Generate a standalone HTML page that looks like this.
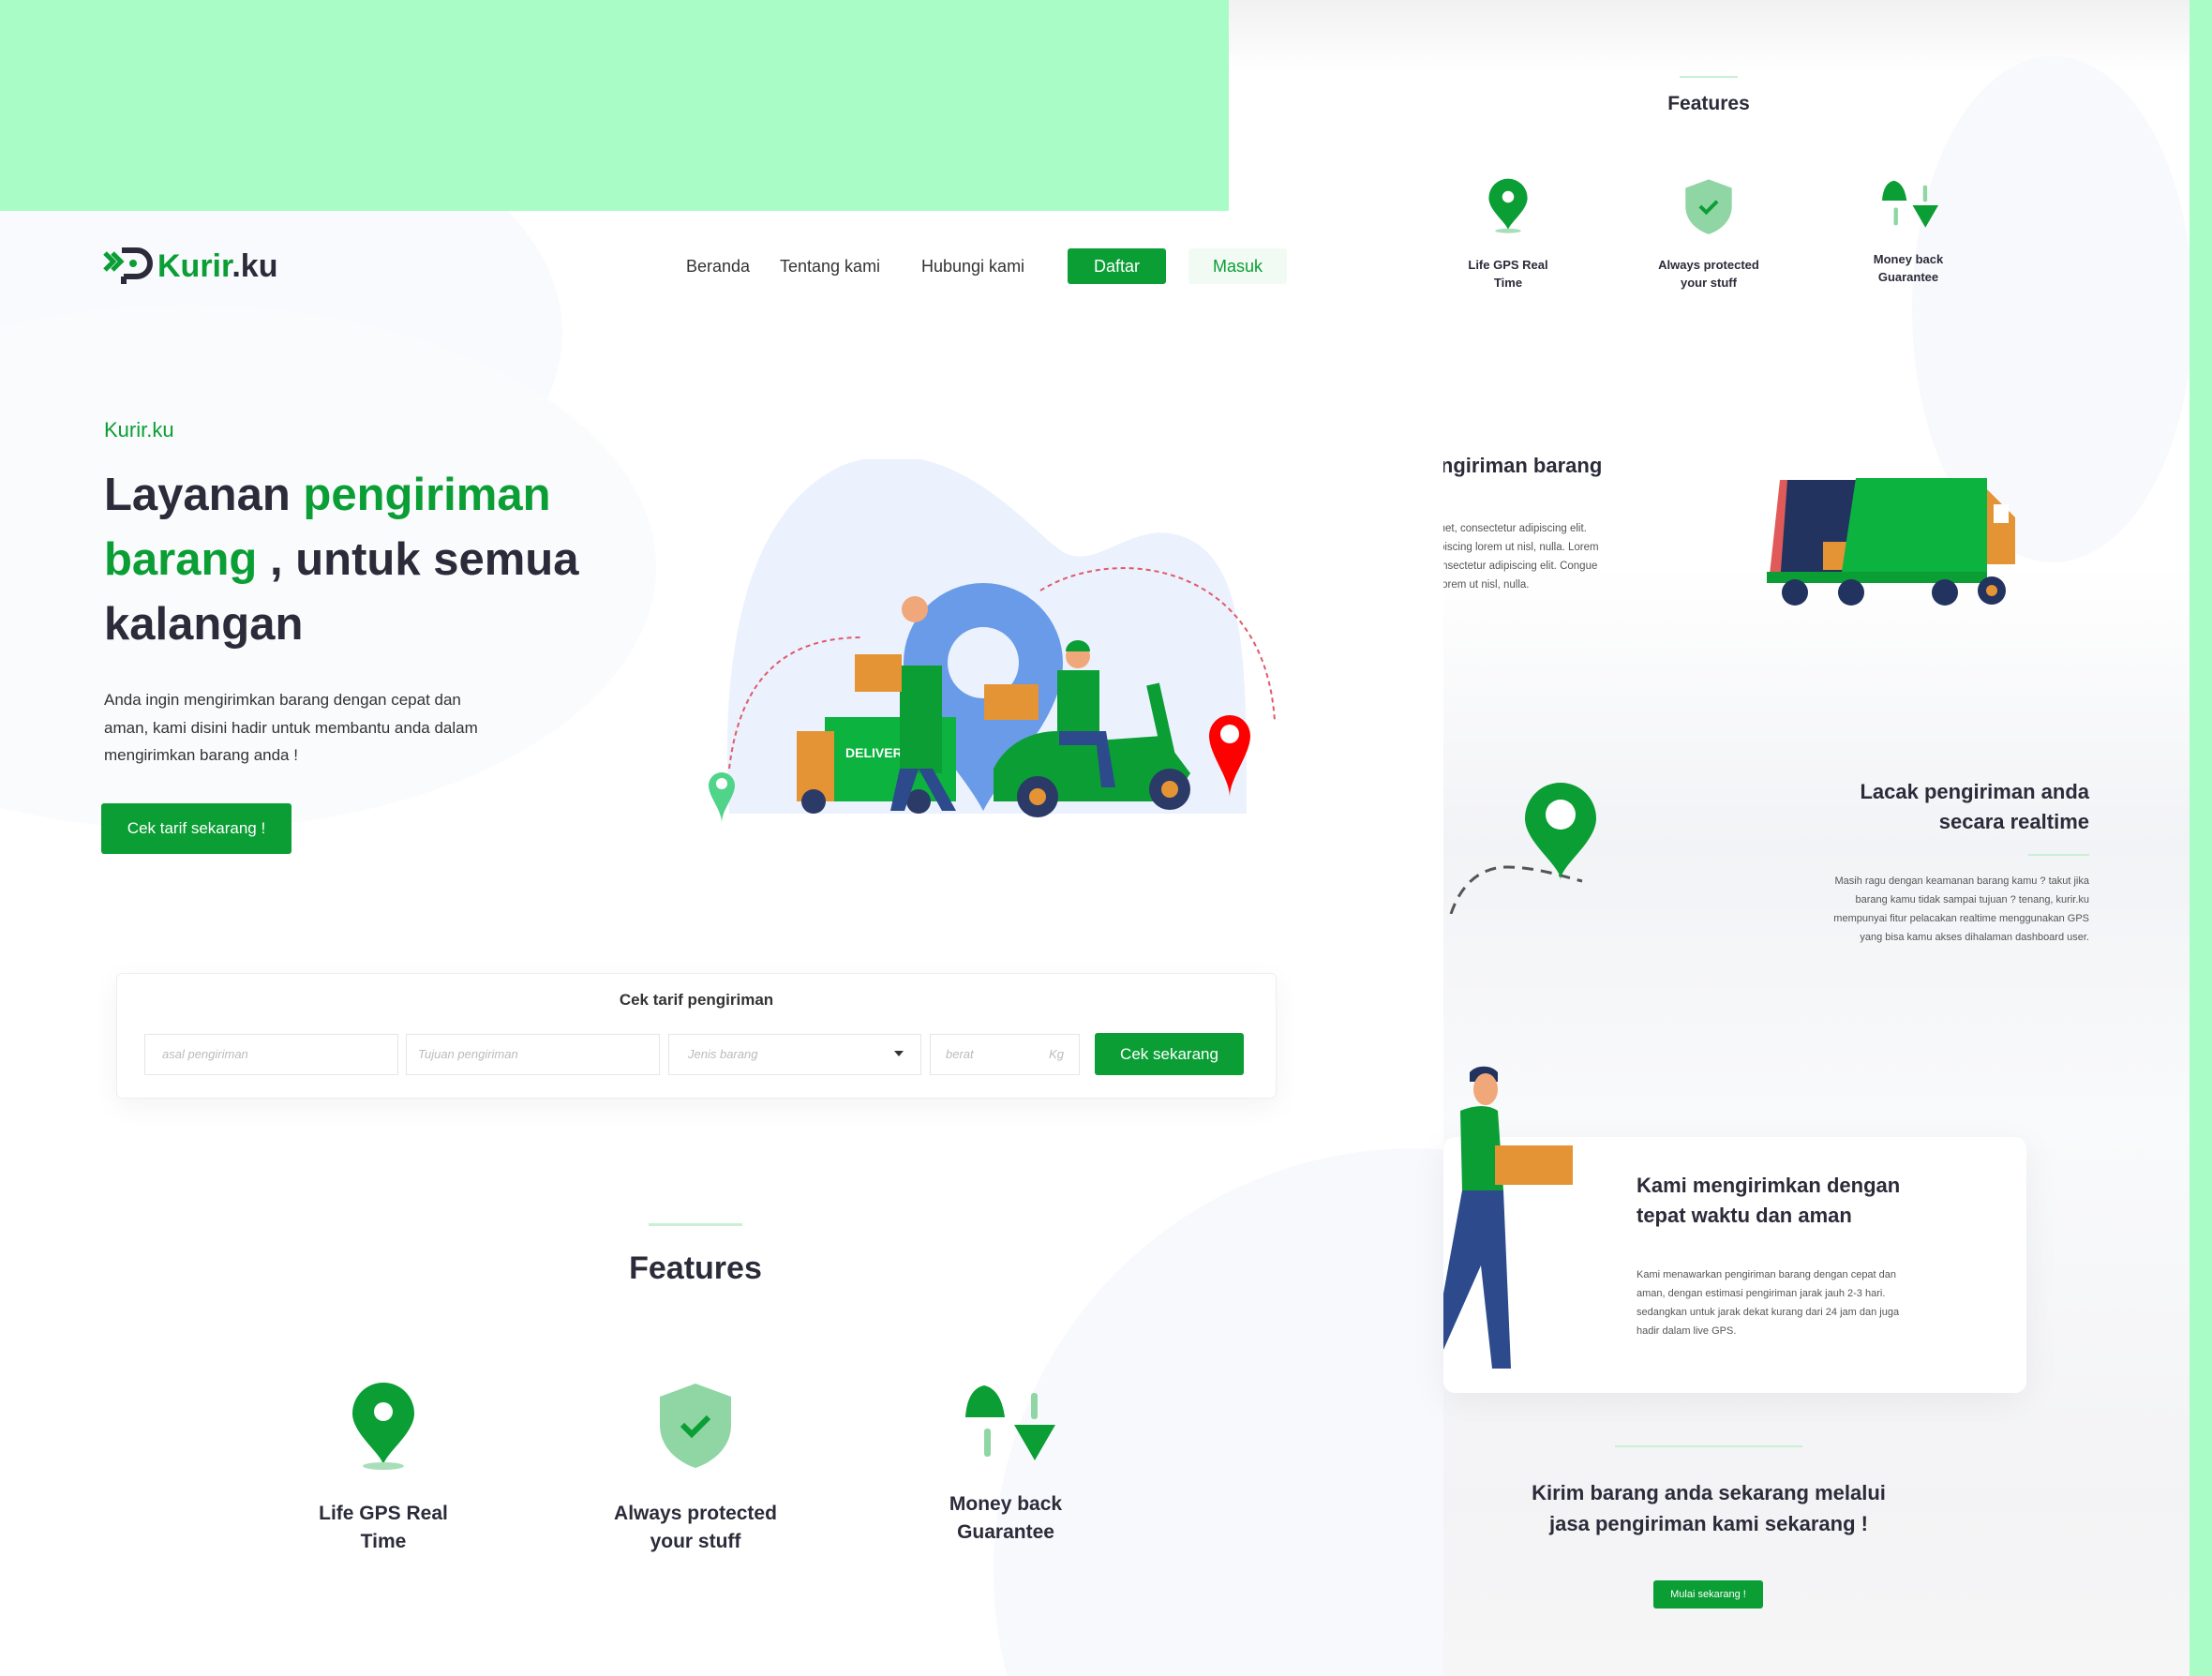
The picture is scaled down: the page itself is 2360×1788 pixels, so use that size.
<!DOCTYPE html>
<html><head><meta charset="utf-8"><style>
*{margin:0;padding:0;box-sizing:border-box}
html,body{width:2360px;height:1788px;overflow:hidden}
body{background:#f4f5f7;font-family:"Liberation Sans",sans-serif;color:#2b2b3a;position:relative}
.abs{position:absolute}
.g{color:#0a9e35}
.btn{position:absolute;background:#0a9e35;color:#fff;display:flex;align-items:center;justify-content:center;border-radius:3px}
.ctr{text-align:center}
</style></head><body>
<div class="abs" style="left:1300px;top:0;width:1040px;height:1788px;background:linear-gradient(180deg,#f1f1f2 0,#fff 80px,#fff 600px,#f2f3f6 900px,#f9fafb 1200px,#f3f3f5 1600px,#f6f6f7 1788px)"></div>
<div class="abs" style="left:2040px;top:60px;width:300px;height:540px;border-radius:50%;background:#f7f9fc"></div>
<div class="abs" style="left:2336px;top:0;width:24px;height:1788px;background:#aafcc6"></div>
<div class="abs" style="left:0;top:0;width:1311px;height:240px;background:#aafcc6"></div>
<div class="abs" style="left:0;top:225px;width:1540px;height:1563px;background:#fff;border-top-right-radius:60px;overflow:hidden">
 <div class="abs" style="left:-200px;top:-120px;width:800px;height:500px;border-radius:50%;background:#f8fafd"></div>
 <div class="abs" style="left:-300px;top:100px;width:1000px;height:560px;border-radius:50%;background:#f9fbfd"></div>
 <div class="abs" style="left:1060px;top:1000px;width:900px;height:900px;border-radius:50%;background:#f7f9fc"></div>
</div>
<svg class="abs" style="left:110px;top:262px" width="54" height="44" viewBox="0 0 54 44"><path d="M2 8l9 9-9 9M10 8l9 9-9 9" stroke="#0a9e35" stroke-width="5" fill="none"/><path d="M20 5h16a14 14 0 0 1 0 28H22" stroke="#2b2b3a" stroke-width="6" fill="none"/><path d="M22 33v8" stroke="#2b2b3a" stroke-width="6"/><circle cx="32" cy="19" r="4" fill="#0a9e35"/></svg>
<div class="abs" style="left:168px;top:262px;font-size:34px;font-weight:bold;line-height:44px"><span class="g">Kurir</span>.ku</div>
<div class="abs" style="left:732px;top:272px;font-size:18px;line-height:24px;color:#333">Beranda</div>
<div class="abs" style="left:832px;top:272px;font-size:18px;line-height:24px;color:#333">Tentang kami</div>
<div class="abs" style="left:983px;top:272px;font-size:18px;line-height:24px;color:#333">Hubungi kami</div>
<div class="btn" style="left:1139px;top:265px;width:105px;height:38px;font-size:18px">Daftar</div>
<div class="btn" style="left:1268px;top:265px;width:105px;height:38px;font-size:18px;background:#f1fbf3;color:#0a9e35">Masuk</div>
<div class="abs g" style="left:111px;top:446px;font-size:22px">Kurir.ku</div>
<div class="abs" style="left:111px;top:494px;font-size:49px;font-weight:bold;line-height:69px;width:560px">Layanan <span class="g">pengiriman barang</span> , untuk semua kalangan</div>
<div class="abs" style="left:111px;top:732px;font-size:17px;line-height:29.5px;color:#333;width:560px">Anda ingin mengirimkan barang dengan cepat dan<br>aman, kami disini hadir untuk membantu anda dalam<br>mengirimkan barang anda !</div>
<div class="btn" style="left:108px;top:857px;width:203px;height:54px;font-size:17px">Cek tarif sekarang !</div>
<svg class="abs" style="left:750px;top:490px" width="650" height="390" viewBox="0 0 650 390">
<path d="M28 378C20 250 30 60 150 6c110-40 190 60 230 90 40 30 80-40 140-10 60 30 60 140 60 292z" fill="#ebf1fd"/>
<path d="M28 330C40 230 90 190 170 190M360 140C440 90 600 110 610 280" stroke="#e05a6a" stroke-width="2" stroke-dasharray="5 4" fill="none"/>
<path d="M214 217a85 85 0 0 1 170 0c0 60-60 110-85 158-25-48-85-98-85-158z" fill="#6a9be8"/>
<circle cx="299" cy="217" r="38" fill="#ebf1fd"/>
<rect x="130" y="275" width="140" height="90" fill="#0cb33e"/>
<rect x="100" y="290" width="40" height="75" fill="#e49434"/>
<text x="152" y="318" font-size="14" fill="#fff" font-family="Liberation Sans" font-weight="bold">DELIVERY</text>
<circle cx="118" cy="365" r="13" fill="#2b3a67"/><circle cx="230" cy="365" r="13" fill="#2b3a67"/>
<path d="M210 220h45v115h-45z" fill="#0a9e35"/><path d="M210 330l-10 45h15l15-45 25 45h15l-25-45z" fill="#2c4a8c"/>
<circle cx="226" cy="160" r="14" fill="#f0a77a"/>
<rect x="162" y="208" width="50" height="40" fill="#e49434"/>
<path d="M310 330c20-40 70-50 110-30l70-5 30 40-20 30H310z" fill="#0a9e35"/>
<path d="M480 240l20 90" stroke="#0a9e35" stroke-width="14"/>
<circle cx="357" cy="360" r="22" fill="#2b3a67"/><circle cx="357" cy="360" r="9" fill="#e49434"/>
<circle cx="498" cy="352" r="22" fill="#2b3a67"/><circle cx="498" cy="352" r="9" fill="#e49434"/>
<rect x="378" y="225" width="45" height="65" fill="#0a9e35"/><path d="M380 290h50l10 60h-15l-5-45h-40z" fill="#2c4a8c"/>
<circle cx="400" cy="210" r="13" fill="#f0a77a"/><path d="M387 205a13 12 0 0 1 26 0z" fill="#0a9e35"/>
<rect x="300" y="240" width="58" height="38" fill="#e49434"/>
<path d="M540 295a22 22 0 0 1 44 0c0 20-22 45-22 65-0-20-22-45-22-65z" fill="#f00"/><circle cx="562" cy="293" r="10" fill="#fff"/>
<path d="M6 348a14 14 0 0 1 28 0c0 12-14 26-14 40 0-14-14-28-14-40z" fill="#4fd48a"/><circle cx="20" cy="346" r="6" fill="#fff"/>
</svg>
<div class="abs" style="left:124px;top:1038px;width:1238px;height:134px;background:#fff;border:1px solid #eee;border-radius:6px;box-shadow:0 8px 30px rgba(0,0,0,.05)"></div>
<div class="abs ctr" style="left:124px;top:1057px;width:1238px;font-size:17px;font-weight:bold;color:#333">Cek tarif pengiriman</div>
<div class="abs" style="left:154px;top:1103px;width:271px;height:44px;border:1px solid #e6e6e6;font-size:13px;color:#bbb;font-style:italic;padding:13px 18px">asal pengiriman</div>
<div class="abs" style="left:433px;top:1103px;width:271px;height:44px;border:1px solid #e6e6e6;font-size:13px;color:#bbb;font-style:italic;padding:13px 12px">Tujuan pengiriman</div>
<div class="abs" style="left:713px;top:1103px;width:270px;height:44px;border:1px solid #e6e6e6;font-size:13px;color:#bbb;font-style:italic;padding:13px 60px 0 20px">Jenis barang<span style="position:absolute;right:18px;top:17px;border:5px solid transparent;border-top:6px solid #333"></span></div>
<div class="abs" style="left:992px;top:1103px;width:160px;height:44px;border:1px solid #e6e6e6;font-size:13px;color:#bbb;font-style:italic;padding:13px 16px">berat<span style="float:right">Kg</span></div>
<div class="btn" style="left:1168px;top:1102px;width:159px;height:45px;font-size:17px">Cek sekarang</div>
<div class="abs" style="left:692px;top:1305px;width:100px;height:3px;background:#c9efd4"></div>
<div class="abs ctr" style="left:542px;top:1334px;width:400px;font-size:34px;font-weight:bold">Features</div>
<svg class="abs" style="left:374px;top:1474px" width="70" height="96" viewBox="0 0 70 96"><path d="M2 34a33 33 0 0 1 66 0c0 22-33 44-33 56 0-12-33-34-33-56z" fill="#0a9e35"/><circle cx="35" cy="32" r="10" fill="#fff"/><ellipse cx="35" cy="90" rx="22" ry="4" fill="#a8dfb8"/></svg>
<svg class="abs" style="left:702px;top:1474px" width="80" height="92" viewBox="0 0 80 92"><path d="M40 2l38 14v30c0 25-20 40-38 46C22 86 2 71 2 46V16z" fill="#8fd6a4"/><path d="M26 46l10 10 18-18" stroke="#0a9e35" stroke-width="6" fill="none"/></svg>
<svg class="abs" style="left:1030px;top:1478px" width="96" height="84" viewBox="0 0 96 84"><path d="M0 34q2-30 20-34 18 4 22 34z" fill="#0a9e35"/><rect x="20" y="46" width="7" height="30" rx="3" fill="#8fd6a4"/><rect x="70" y="8" width="7" height="28" rx="3" fill="#8fd6a4"/><path d="M52 42h44l-22 38z" fill="#0a9e35"/></svg>
<div class="abs ctr" style="left:334px;top:1600px;width:150px;font-size:21px;font-weight:bold;line-height:30px">Life GPS Real Time</div>
<div class="abs ctr" style="left:647px;top:1600px;width:190px;font-size:21px;font-weight:bold;line-height:30px">Always protected your stuff</div>
<div class="abs ctr" style="left:993px;top:1590px;width:160px;font-size:21px;font-weight:bold;line-height:30px">Money back Guarantee</div>
<div class="abs" style="left:1792px;top:81px;width:62px;height:2px;background:#c9efd4"></div>
<div class="abs ctr" style="left:1723px;top:99px;width:200px;font-size:21px;font-weight:bold">Features</div>
<svg class="abs" style="left:1586px;top:190px" width="46" height="60" viewBox="0 0 70 96"><path d="M2 34a33 33 0 0 1 66 0c0 22-33 44-33 56 0-12-33-34-33-56z" fill="#0a9e35"/><circle cx="35" cy="32" r="10" fill="#fff"/><ellipse cx="35" cy="90" rx="22" ry="4" fill="#a8dfb8"/></svg>
<svg class="abs" style="left:1797px;top:190px" width="52" height="60" viewBox="0 0 80 92"><path d="M40 2l38 14v30c0 25-20 40-38 46C22 86 2 71 2 46V16z" fill="#8fd6a4"/><path d="M26 46l10 10 18-18" stroke="#0a9e35" stroke-width="6" fill="none"/></svg>
<svg class="abs" style="left:2008px;top:192px" width="60" height="54" viewBox="0 0 96 84"><path d="M0 34q2-30 20-34 18 4 22 34z" fill="#0a9e35"/><rect x="20" y="46" width="7" height="30" rx="3" fill="#8fd6a4"/><rect x="70" y="8" width="7" height="28" rx="3" fill="#8fd6a4"/><path d="M52 42h44l-22 38z" fill="#0a9e35"/></svg>
<div class="abs ctr" style="left:1564px;top:273px;width:90px;font-size:13px;font-weight:bold;line-height:19px">Life GPS Real Time</div>
<div class="abs ctr" style="left:1763px;top:273px;width:120px;font-size:13px;font-weight:bold;line-height:19px">Always protected your stuff</div>
<div class="abs ctr" style="left:1986px;top:267px;width:100px;font-size:13px;font-weight:bold;line-height:19px">Money back Guarantee</div>
<div class="abs" style="left:1540px;top:480px;width:300px;height:200px;overflow:hidden">
 <div style="margin-left:-30px;font-size:22px;font-weight:bold;line-height:33px;width:330px">Pengiriman barang<br>:</div>
 <div style="margin-left:-14px;margin-top:8px;font-size:11.5px;line-height:20px;color:#555">amet, consectetur adipiscing elit.<br>dipiscing lorem ut nisl, nulla. Lorem<br>consectetur adipiscing elit. Congue<br>g lorem ut nisl, nulla.</div>
</div>
<svg class="abs" style="left:1885px;top:508px" width="272" height="146" viewBox="0 0 272 146"><path d="M14 4h90v110H2z" fill="#e05a5a"/><path d="M22 4h90v110H14z" fill="#22335f"/><rect x="60" y="70" width="40" height="30" fill="#e49434"/><path d="M95 2h140v100H80z" fill="#0cb33e"/><path d="M235 14l30 30v50h-30z" fill="#e49434"/><rect x="242" y="30" width="16" height="20" fill="#fff"/><path d="M0 102h235v12H0z" fill="#0a9e35"/><circle cx="30" cy="124" r="14" fill="#22335f"/><circle cx="90" cy="124" r="14" fill="#22335f"/><circle cx="190" cy="124" r="14" fill="#22335f"/><circle cx="240" cy="122" r="15" fill="#22335f"/><circle cx="240" cy="122" r="6" fill="#e49434"/></svg>
<svg class="abs" style="left:1540px;top:825px" width="180" height="150" viewBox="0 0 180 150"><path d="M8 150c10-30 30-50 60-50s60 10 80 15" stroke="#555" stroke-width="3" stroke-dasharray="12 8" fill="none"/><path d="M87 48a38 38 0 0 1 76 0c0 26-38 50-38 66 0-16-38-40-38-66z" fill="#0a9e35"/><circle cx="125" cy="44" r="16" fill="#fff"/></svg>
<div class="abs" style="left:1900px;top:829px;width:329px;text-align:right;font-size:22px;font-weight:bold;line-height:32px">Lacak pengiriman anda<br>secara realtime</div>
<div class="abs" style="left:2164px;top:911px;width:65px;height:2px;background:#c9efd4"></div>
<div class="abs" style="left:1880px;top:930px;width:349px;text-align:right;font-size:11px;line-height:20px;color:#555">Masih ragu dengan keamanan barang kamu ? takut jika<br>barang kamu tidak sampai tujuan ? tenang, kurir.ku<br>mempunyai fitur pelacakan realtime menggunakan GPS<br>yang bisa kamu akses dihalaman dashboard user.</div>
<div class="abs" style="left:1540px;top:1213px;width:622px;height:273px;background:#fff;border-radius:12px;box-shadow:0 10px 40px rgba(0,0,0,.06)"></div>
<svg class="abs" style="left:1540px;top:1130px" width="140" height="345" viewBox="0 0 140 345"><path d="M28 14a18 14 0 0 1 30 0v10H28z" fill="#22335f"/><ellipse cx="45" cy="32" rx="13" ry="17" fill="#f0a77a"/><path d="M18 55q25-10 40 0l6 85H20z" fill="#0a9e35"/><path d="M20 140h44l8 190H52L40 220 0 310v-60z" fill="#2c4a8c"/><rect x="55" y="92" width="83" height="42" fill="#e49434"/></svg>
<div class="abs" style="left:1746px;top:1249px;font-size:22px;font-weight:bold;line-height:32px">Kami mengirimkan dengan<br>tepat waktu dan aman</div>
<div class="abs" style="left:1746px;top:1350px;width:360px;font-size:11px;line-height:20px;color:#555">Kami menawarkan pengiriman barang dengan cepat dan<br>aman, dengan estimasi pengiriman jarak jauh 2-3 hari.<br>sedangkan untuk jarak dekat kurang dari 24 jam dan juga<br>hadir dalam live GPS.</div>
<div class="abs" style="left:1723px;top:1542px;width:200px;height:2px;background:#c9efd4"></div>
<div class="abs ctr" style="left:1573px;top:1576px;width:500px;font-size:22px;font-weight:bold;line-height:33px">Kirim barang anda sekarang melalui<br>jasa pengiriman kami sekarang !</div>
<div class="btn" style="left:1764px;top:1686px;width:117px;height:30px;font-size:11px">Mulai sekarang !</div>
</body></html>
